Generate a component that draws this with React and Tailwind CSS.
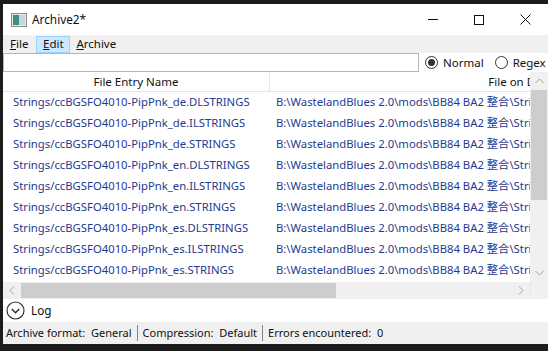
import React from "react";

const rows = [
  "de.DLSTRINGS",
  "de.ILSTRINGS",
  "de.STRINGS",
  "en.DLSTRINGS",
  "en.ILSTRINGS",
  "en.STRINGS",
  "es.DLSTRINGS",
  "es.ILSTRINGS",
  "es.STRINGS",
];

const font = { fontFamily: '"Noto Sans", "Noto Sans CJK SC", sans-serif' };

function Radio({ checked, label }) {
  return (
    <div className="flex items-center gap-[5px]">
      <div className="w-[13px] h-[13px] rounded-full border border-[#333] bg-white flex items-center justify-center">
        {checked && <div className="w-[7px] h-[7px] rounded-full bg-[#333]" />}
      </div>
      <span className="text-[11.5px] text-[#111]">{label}</span>
    </div>
  );
}

export default function App() {
  return (
    <div
      className="w-[548px] h-[351px] bg-[#1c1c1c] pt-[4px] pl-[3px] pb-[7px] flex flex-col overflow-hidden"
      style={font}
    >
      <div className="flex-1 flex flex-col bg-white overflow-hidden">
        {/* Title bar */}
        <div className="h-[31px] flex items-center shrink-0">
          <svg width="16" height="14" viewBox="0 0 16 14" className="ml-[8px]">
            <rect x="0.5" y="0.5" width="15" height="13" fill="#e8e8e8" stroke="#8a8a8a" />
            <rect x="2" y="2" width="6" height="10" fill="#3d8f86" />
            <rect x="8" y="2" width="6" height="10" fill="#c9d6d8" />
          </svg>
          <span className="ml-[5px] text-[11.8px] text-[#111]">Archive2*</span>
          <div className="ml-auto flex items-center h-full">
            <div className="w-[46px] h-full flex items-center justify-center">
              <div className="w-[10px] h-[1px] bg-[#111]" />
            </div>
            <div className="w-[46px] h-full flex items-center justify-center">
              <div className="w-[10px] h-[10px] border border-[#111]" />
            </div>
            <div className="w-[46px] h-full flex items-center justify-center">
              <svg width="11" height="11" viewBox="0 0 11 11">
                <path d="M0.5 0.5L10.5 10.5M10.5 0.5L0.5 10.5" stroke="#111" strokeWidth="1" />
              </svg>
            </div>
          </div>
        </div>
        {/* Menu bar */}
        <div className="h-[18px] bg-[#f0f0f0] flex items-center text-[11.5px] text-[#111] shrink-0">
          <span className="ml-[7px]"><u>F</u>ile</span>
          <span className="ml-[8px] h-[17px] w-[34px] flex items-center justify-center bg-[#cce8ff] border border-[#99d1ff]"><u>E</u>dit</span>
          <span className="ml-[6px]"><u>A</u>rchive</span>
        </div>
        {/* Search row */}
        <div className="h-[19px] flex items-center shrink-0">
          <div className="w-[416px] h-[19px] border border-[#b5b5b5] bg-white shrink-0" />
          <div className="ml-[6px] shrink-0"><Radio checked label="Normal" /></div>
          <div className="ml-[11px] shrink-0"><Radio label="Regex" /></div>
        </div>
        {/* List */}
        <div className="flex h-[210px] shrink-0">
          <div className="flex-1 flex flex-col overflow-hidden">
            <div className="h-[20px] flex text-[11.5px] text-[#111] border-b border-[#e5e5e5] shrink-0">
              <div className="w-[267px] shrink-0 flex items-center justify-center border-r border-[#e5e5e5]">File Entry Name</div>
              <div className="w-[498px] shrink-0 flex items-center justify-center whitespace-nowrap">File on Disk</div>
            </div>
            {rows.map((r) => (
              <div key={r} className="h-[21px] flex items-center text-[11.3px] text-[#1f3a8f] whitespace-nowrap shrink-0">
                <div className="w-[267px] shrink-0 pl-[10px] overflow-hidden">Strings/ccBGSFO4010-PipPnk_{r}</div>
                <div className="pl-[6px] shrink-0">B:\WastelandBlues 2.0\mods\BB84 BA2 整合\Strings</div>
              </div>
            ))}
          </div>
          {/* Vertical scrollbar */}
          <div className="w-[18px] bg-[#f0f0f0] flex flex-col shrink-0">
            <div className="h-[18px] flex items-center justify-center">
              <svg width="9" height="6" viewBox="0 0 9 6"><path d="M0.5 5L4.5 1L8.5 5" fill="none" stroke="#a0a0a0" /></svg>
            </div>
            <div className="h-[110px] mx-[1px] bg-[#cdcdcd]" />
            <div className="flex-1" />
            <div className="h-[18px] flex items-center justify-center">
              <svg width="9" height="6" viewBox="0 0 9 6"><path d="M0.5 1L4.5 5L8.5 1" fill="none" stroke="#a0a0a0" /></svg>
            </div>
          </div>
        </div>
        {/* Horizontal scrollbar */}
        <div className="h-[17px] flex shrink-0">
          <div className="flex-1 bg-[#f0f0f0] flex items-center">
            <div className="w-[18px] flex items-center justify-center">
              <svg width="6" height="9" viewBox="0 0 6 9"><path d="M5 0.5L1 4.5L5 8.5" fill="none" stroke="#a0a0a0" /></svg>
            </div>
            <div className="w-[315px] h-[15px] bg-[#cdcdcd]" />
            <div className="flex-1" />
            <div className="w-[18px] flex items-center justify-center">
              <svg width="6" height="9" viewBox="0 0 6 9"><path d="M1 0.5L5 4.5L1 8.5" fill="none" stroke="#a0a0a0" /></svg>
            </div>
          </div>
          <div className="w-[18px] bg-[#f0f0f0] border-l border-[#e8e8e8]" />
        </div>
        {/* Log */}
        <div className="h-[23px] flex items-center shrink-0">
          <svg width="19" height="19" viewBox="0 0 19 19" className="ml-[3px]">
            <circle cx="9.5" cy="9.5" r="8.5" fill="white" stroke="#333" strokeWidth="1.2" />
            <path d="M5.8 8L9.5 11.7L13.2 8" fill="none" stroke="#333" strokeWidth="1.6" />
          </svg>
          <span className="ml-[6px] text-[11.8px] text-[#111]">Log</span>
        </div>
        {/* Status bar */}
        <div className="flex-1 bg-[#f0f0f0] flex items-center text-[11px] text-[#111] whitespace-nowrap">
          <span className="ml-[3px]">Archive format:&nbsp; General</span>
          <div className="w-[1px] h-[16px] bg-[#888] mx-[5px]" />
          <span>Compression:&nbsp; Default</span>
          <div className="w-[1px] h-[16px] bg-[#888] mx-[5px]" />
          <span>Errors encountered:&nbsp; 0</span>
        </div>
      </div>
    </div>
  );
}
